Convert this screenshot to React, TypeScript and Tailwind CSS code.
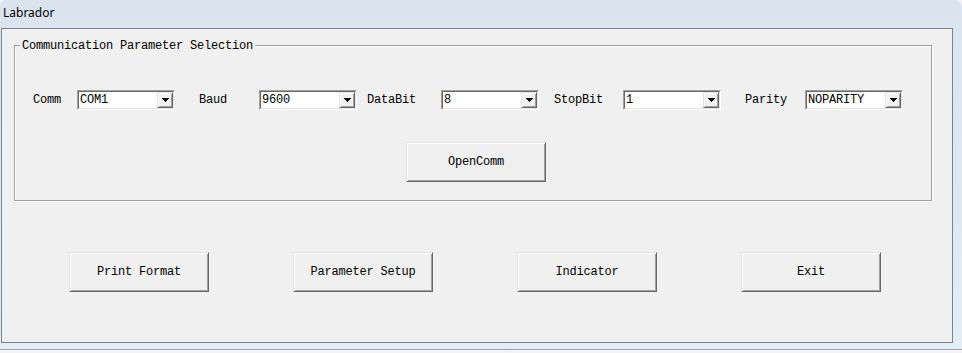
import React from "react";

const mono = "font-['Liberation_Mono','Courier_New',monospace] text-[12px] tracking-[-0.2px] text-black";

function Combo({ value }: { value: string }) {
  return (
    <div className="w-[98px] h-[20px] border border-t-[#a0a0a0] border-l-[#a0a0a0] border-r-white border-b-white">
      <div className="h-full flex items-stretch bg-white border border-t-[#696969] border-l-[#696969] border-r-[#e3e3e3] border-b-[#e3e3e3]">
        <span className={`flex-1 pl-[1px] flex items-center leading-none ${mono}`}>{value}</span>
        <div className="w-[16px] bg-[#f0f0f0] border border-t-[#e3e3e3] border-l-[#e3e3e3] border-r-[#696969] border-b-[#696969] shadow-[inset_1px_1px_0_#fff,inset_-1px_-1px_0_#a0a0a0] flex items-center justify-center">
          <svg width="7" height="4" viewBox="0 0 7 4">
            <path d="M0 0h7v1H0zM1 1h5v1H1zM2 2h3v1H2zM3 3h1v1H3z" fill="#000" />
          </svg>
        </div>
      </div>
    </div>
  );
}

function Btn({ label, className = "" }: { label: string; className?: string }) {
  return (
    <div
      className={`w-[140px] h-[40px] shrink-0 bg-[#f0f0f0] border border-t-[#e3e3e3] border-l-[#e3e3e3] border-r-[#696969] border-b-[#696969] shadow-[inset_1px_1px_0_#fff,inset_-1px_-1px_0_#a0a0a0] flex items-center justify-center ${mono} ${className}`}
    >
      {label}
    </div>
  );
}

function Field({ label, pl, value }: { label: string; pl: string; value: string }) {
  return (
    <>
      <div className={`w-[84px] ${pl} ${mono}`}>{label}</div>
      <Combo value={value} />
    </>
  );
}

export default function App() {
  return (
    <div className="w-[962px] h-[353px] bg-[#f4f4f4] overflow-hidden">
      <div className="w-[962px] h-[350px] bg-gradient-to-b from-[#dae4ef] to-[#e4ecf4] rounded-tl-[6px] rounded-tr-[8px] border-b border-[#98a3ae] flex flex-col">
        <div className="h-[28px] pl-[3px] pb-[3px] flex items-center font-['Noto_Sans','Liberation_Sans',sans-serif] text-[12px] text-black">
          Labrador
        </div>
        <div className="ml-[1px] w-[952px] h-[315px] border border-[#77838f] bg-[#f0f0f0] flex flex-col">
          <div className="relative ml-[12px] mt-[16px] w-[918px] h-[156px] border border-[#a0a0a0] shadow-[inset_1px_1px_0_#fff,1px_1px_0_#fff] flex flex-col">
            <div className={`absolute left-[5px] top-[-8px] px-[2px] bg-[#f0f0f0] leading-[16px] ${mono}`}>
              Communication Parameter Selection
            </div>
            <div className="mt-[44px] pl-[18px] h-[20px] flex items-center">
              <div className={`w-[44px] ${mono}`}>Comm</div>
              <Combo value="COM1" />
              <Field label="Baud" pl="pl-[24px]" value="9600" />
              <Field label="DataBit" pl="pl-[10px]" value="8" />
              <Field label="StopBit" pl="pl-[15px]" value="1" />
              <Field label="Parity" pl="pl-[24px]" value="NOPARITY" />
            </div>
            <div className="mt-[32px] ml-[391px] flex">
              <Btn label="OpenComm" />
            </div>
          </div>
          <div className="mt-[51px] ml-[67px] flex gap-[84px]">
            <Btn label="Print Format" />
            <Btn label="Parameter Setup" />
            <Btn label="Indicator" />
            <Btn label="Exit" />
          </div>
        </div>
      </div>
    </div>
  );
}
